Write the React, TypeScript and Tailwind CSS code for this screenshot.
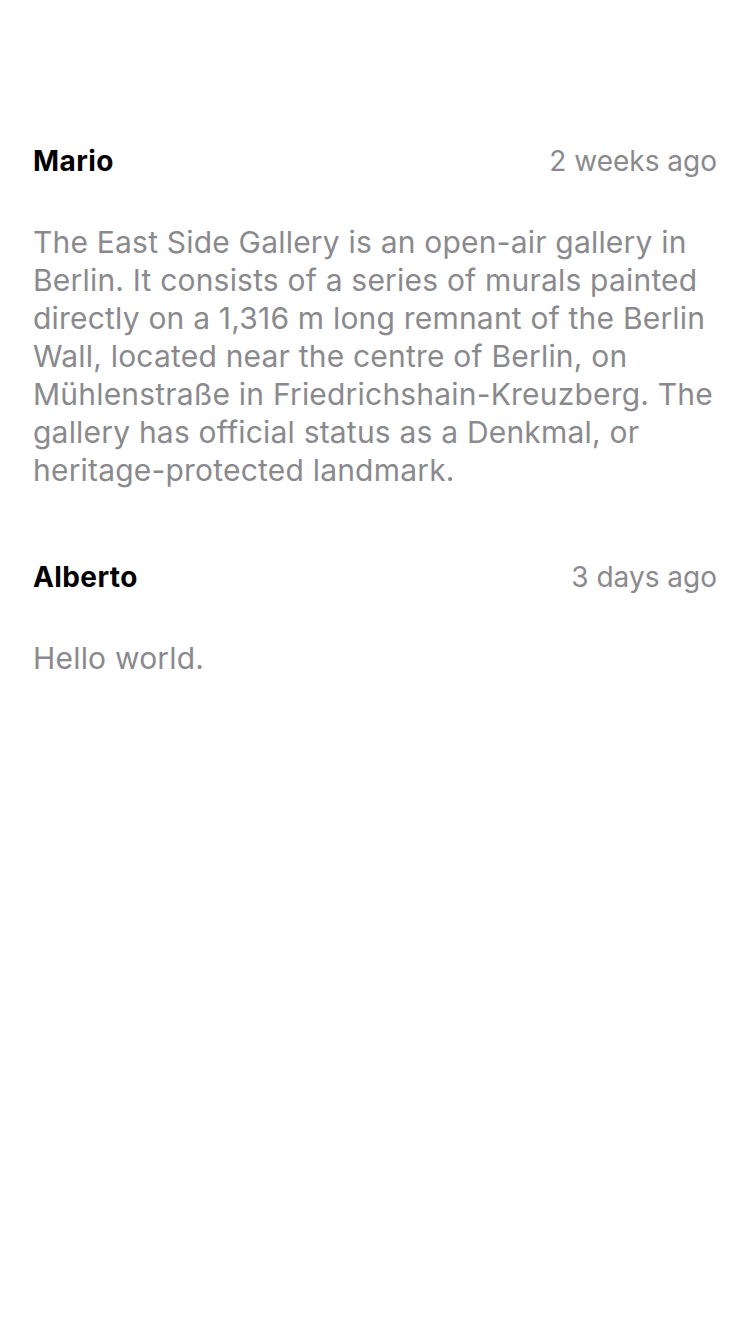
import React from "react";

const comments = [
  {
    name: "Mario",
    time: "2 weeks ago",
    text: "The East Side Gallery is an open-air gallery in Berlin. It consists of a series of murals painted directly on a 1,316 m long remnant of the Berlin Wall, located near the centre of Berlin, on Mühlenstraße in Friedrichshain-Kreuzberg. The gallery has official status as a Denkmal, or heritage-protected landmark.",
  },
  { name: "Alberto", time: "3 days ago", text: "Hello world." },
];

export default function App() {
  return (
    <div
      className="min-h-[1334px] w-[750px] bg-white px-[33px] pt-[144px]"
      style={{ fontFamily: "Inter, 'Noto Sans', sans-serif" }}
    >
      <div className="flex flex-col gap-[71px]">
        {comments.map((c) => (
          <div key={c.name} className="flex flex-col gap-[45px]">
            <div className="flex h-[34px] items-center justify-between">
              <span className="text-[28px] font-bold text-black tracking-[0.4px]">{c.name}</span>
              <span className="text-[28px] text-[#8a8a8e]">{c.time}</span>
            </div>
            <p className="text-[30px] leading-[38px] text-[#8a8a8e] tracking-[0.2px]">{c.text}</p>
          </div>
        ))}
      </div>
    </div>
  );
}
